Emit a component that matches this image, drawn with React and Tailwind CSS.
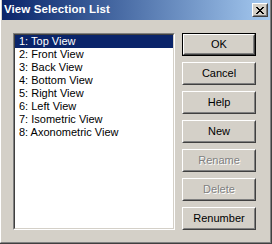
import React from "react"

const views = [
  "1: Top View",
  "2: Front View",
  "3: Back View",
  "4: Bottom View",
  "5: Right View",
  "6: Left View",
  "7: Isometric View",
  "8: Axonometric View",
]

function Button({ label, isDefault, disabled }) {
  const inner = (
    <div className="h-full border border-t-white border-l-white border-r-[#404040] border-b-[#404040]">
      <div className="h-full flex items-center justify-center border border-t-[#d4d0c8] border-l-[#d4d0c8] border-r-[#808080] border-b-[#808080]">
        <span
          className={
            disabled
              ? "text-[#808080] [text-shadow:1px_1px_0_#ffffff]"
              : "text-black"
          }
        >
          {label}
        </span>
      </div>
    </div>
  )
  return (
    <div className={`h-[23px] ${isDefault ? "border border-black" : ""}`}>
      {inner}
    </div>
  )
}

export default function App() {
  return (
    <div className="w-[272px] h-[244px] bg-[#d4d0c8] border-r border-b border-r-[#404040] border-b-[#404040] text-[11px] font-['Liberation_Sans',Arial,sans-serif] leading-none">
      <div className="h-full flex flex-col border-l border-r border-b border-l-white border-r-[#808080] border-b-[#808080]">
        {/* Title bar */}
        <div className="h-[20px] ml-px flex items-center justify-between bg-gradient-to-r from-[#0a246a] to-[#a6caf0] pl-[2px] pr-[2px]">
          <span className="text-white font-bold text-[11.5px] tracking-[0.1px]">View Selection List</span>
          <div className="w-[16px] h-[14px] bg-[#d4d0c8] border border-t-white border-l-white border-r-[#404040] border-b-[#404040]">
            <div className="w-full h-full flex items-center justify-center border border-t-[#d4d0c8] border-l-[#d4d0c8] border-r-[#808080] border-b-[#808080]">
              <svg width="8" height="7" viewBox="0 0 8 7" shapeRendering="crispEdges">
                <path
                  d="M0 0h2v1h-2zM6 0h2v1h-2zM1 1h2v1h-2zM5 1h2v1h-2zM2 2h4v1h-4zM3 3h2v1h-2zM2 4h4v1h-4zM1 5h2v1h-2zM5 5h2v1h-2zM0 6h2v1h-2zM6 6h2v1h-2z"
                  fill="#000"
                />
              </svg>
            </div>
          </div>
        </div>

        {/* Body */}
        <div className="flex pl-[12px] pt-[13px] gap-[7px]">
          <div className="w-[162px] h-[197px] border border-t-[#808080] border-l-[#808080] border-r-white border-b-white">
            <div className="h-full bg-white border border-t-[#404040] border-l-[#404040] border-r-[#d4d0c8] border-b-[#d4d0c8]">
              {views.map((v, i) => (
                <div
                  key={v}
                  className={`h-[13px] flex items-center pl-[4px] ${
                    i === 0 ? "bg-[#0a246a] text-white" : "text-black"
                  }`}
                >
                  {v}
                </div>
              ))}
            </div>
          </div>
          <div className="w-[74px] flex flex-col gap-[6px]">
            <Button label="OK" isDefault />
            <Button label="Cancel" />
            <Button label="Help" />
            <Button label="New" />
            <Button label="Rename" disabled />
            <Button label="Delete" disabled />
            <Button label="Renumber" />
          </div>
        </div>
      </div>
    </div>
  )
}
